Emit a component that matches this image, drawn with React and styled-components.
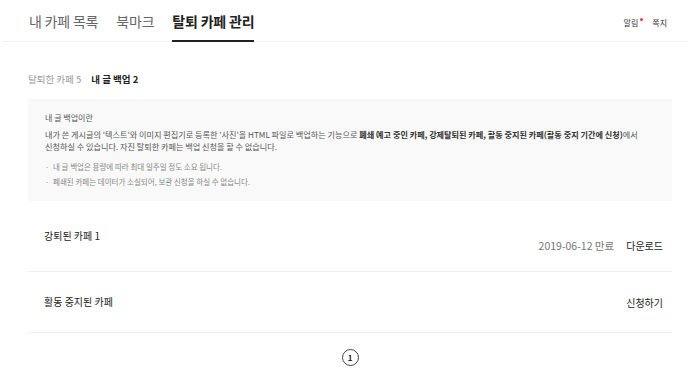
import React from 'react';
import styled, { createGlobalStyle } from 'styled-components';

const GlobalStyle = createGlobalStyle`
  body {
    margin: 0;
    background: #fff;
    font-family: "Noto Sans CJK KR", "Noto Sans", sans-serif;
    color: #222;
  }
`;

const tabs = [
  { label: '내 카페 목록' },
  { label: '북마크' },
  { label: '탈퇴 카페 관리', active: true },
];

const rows = [
  { name: '강퇴된 카페 1', date: '2019-06-12 만료', action: '다운로드', tall: true },
  { name: '활동 중지된 카페', action: '신청하기' },
];

export default function App() {
  return (
    <>
      <GlobalStyle />
      <Header>
        <TabList>
          {tabs.map((t) => (
            <Tab key={t.label} active={t.active}>
              {t.label}
            </Tab>
          ))}
        </TabList>
        <Util>
          <UtilLink>
            알림<Dot />
          </UtilLink>
          <UtilLink>쪽지</UtilLink>
        </Util>
      </Header>

      <Content>
        <SubTabs>
          <SubTab>탈퇴한 카페 5</SubTab>
          <SubTab active>내 글 백업 2</SubTab>
        </SubTabs>

        <InfoBox>
          <InfoTitle>내 글 백업이란</InfoTitle>
          <InfoText>
            내가 쓴 게시글의 '텍스트'와 이미지 편집기로 등록한 '사진'을 HTML 파일로 백업하는 기능으로{' '}
            <strong>폐쇄 예고 중인 카페, 강제탈퇴된 카페, 활동 중지된 카페(활동 중지 기간에 신청)</strong>에서
            <br />
            신청하실 수 있습니다. 자진 탈퇴한 카페는 백업 신청을 할 수 없습니다.
          </InfoText>
          <NoteList>
            <Note>내 글 백업은 용량에 따라 최대 일주일 정도 소요 됩니다.</Note>
            <Note>폐쇄된 카페는 데이터가 소실되어, 보관 신청을 하실 수 없습니다.</Note>
          </NoteList>
        </InfoBox>

        <List>
          {rows.map((r) => (
            <Row key={r.name} tall={r.tall}>
              <CafeName>{r.name}</CafeName>
              <RowRight tall={r.tall}>
                {r.date && <Expire>{r.date}</Expire>}
                <Action>{r.action}</Action>
              </RowRight>
            </Row>
          ))}
        </List>

        <Pager>
          <PageNum>1</PageNum>
        </Pager>
      </Content>
    </>
  );
}

const Header = styled.div`
  display: flex;
  align-items: stretch;
  justify-content: space-between;
  height: 41px;
  margin: 0 12px 0 3px;
  padding: 0 21px 0 26px;
  border-bottom: 1px solid #f0f0f0;
`;

const TabList = styled.div`
  display: flex;
  gap: 18px;
`;

const Tab = styled.a`
  display: flex;
  align-items: center;
  padding-top: 2px;
  margin-bottom: -1px;
  font-size: 14px;
  letter-spacing: -0.2px;
  font-weight: ${(p) => (p.active ? 700 : 400)};
  color: ${(p) => (p.active ? '#222' : '#666')};
  border-bottom: 2px solid ${(p) => (p.active ? '#222' : 'transparent')};
  cursor: pointer;
`;

const Util = styled.div`
  display: flex;
  align-items: center;
  gap: 14px;
  padding-top: 4px;
`;

const UtilLink = styled.a`
  position: relative;
  font-size: 8px;
  color: #333;
  cursor: pointer;
`;

const Dot = styled.span`
  position: absolute;
  top: 1px;
  right: -5px;
  width: 3px;
  height: 3px;
  border-radius: 50%;
  background: #f53535;
`;

const Content = styled.div`
  padding: 0 28px;
`;

const SubTabs = styled.div`
  display: flex;
  gap: 10px;
  padding: 30px 0 13px;
`;

const SubTab = styled.span`
  font-size: 9.5px;
  font-weight: ${(p) => (p.active ? 700 : 400)};
  color: ${(p) => (p.active ? '#222' : '#999')};
`;

const InfoBox = styled.div`
  background: #f9f9f9;
  padding: 13px 17px 12px;
`;

const InfoTitle = styled.div`
  font-size: 8px;
  color: #555;
  margin-bottom: 6px;
`;

const InfoText = styled.p`
  margin: 0;
  font-size: 8.15px;
  line-height: 12px;
  color: #555;
  white-space: nowrap;

  strong {
    color: #333;
    font-weight: 700;
  }
`;

const NoteList = styled.ul`
  list-style: none;
  margin: 6px 0 0;
  padding: 0;
`;

const Note = styled.li`
  position: relative;
  padding-left: 8px;
  font-size: 7.5px;
  line-height: 15px;
  color: #888;

  &::before {
    content: '·';
    position: absolute;
    left: 0;
  }
`;

const List = styled.div``;

const Row = styled.div`
  display: flex;
  align-items: center;
  justify-content: space-between;
  height: ${(p) => (p.tall ? '70px' : '60px')};
  padding: 0 9px 0 16px;
  border-bottom: 1px solid #f0f0f0;
`;

const CafeName = styled.span`
  font-size: 10px;
  color: #222;
  margin-top: -2px;
`;

const RowRight = styled.div`
  display: flex;
  align-items: center;
  gap: 12px;
  margin-top: ${(p) => (p.tall ? '18px' : '0')};
`;

const Expire = styled.span`
  font-size: 10.5px;
  color: #777;
`;

const Action = styled.a`
  font-size: 10px;
  color: #222;
  cursor: pointer;
`;

const Pager = styled.div`
  display: flex;
  justify-content: center;
  padding-top: 16px;
`;

const PageNum = styled.span`
  display: flex;
  align-items: center;
  justify-content: center;
  width: 15px;
  height: 15px;
  border: 1px solid #444;
  border-radius: 50%;
  font-size: 8px;
  font-weight: 700;
  color: #222;
`;
